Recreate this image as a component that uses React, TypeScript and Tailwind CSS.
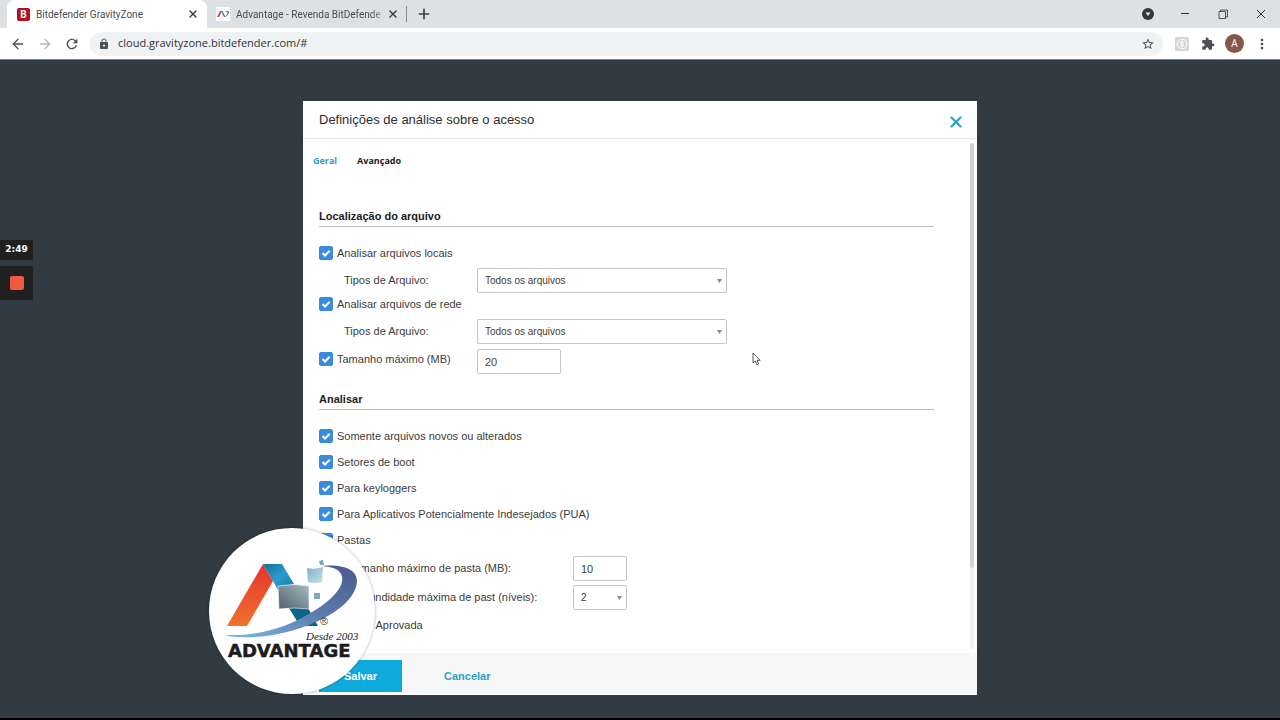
import { useState, type ReactNode } from 'react';
import { ArrowLeft, ArrowRight, Plus, X } from 'lucide-react';
import { MdExtension, MdLock, MdMoreVert, MdRefresh, MdStarBorder } from 'react-icons/md';

/* ── Browser chrome ── */

function AdvantageFavicon() {
  return (
    <svg viewBox="0 0 14 14" className="h-3.5 w-3.5 shrink-0 bg-white" aria-hidden="true">
      <path d="M1 10 4 4h2L3 10z" fill="#d9493b" />
      <path d="M5 4h1.500l3 6H8z" fill="#2a7fa8" />
      <path d="M8 4.500c4-1.500 6 0 4.500 2.500-1 1.500-2.500 2.500-5 3.200 2-1.200 3.500-2.200 4-3.700.5-1.500-1-2-3.500-2z" fill="#4d6a9a" />
    </svg>
  );
}

function TabStrip() {
  return (
    <div className="flex h-7 items-stretch bg-[#dde1e4] font-[Roboto,sans-serif] text-[10px] text-[#4a4d51]">
      <div className="ml-[7px] flex w-[200px] items-center rounded-t-lg bg-white pr-2 pl-2.5">
        <span className="flex h-[13px] w-[13px] items-center justify-center rounded-xs bg-[#b3121b] font-bold text-white">
          B
        </span>
        <span className="ml-1.5 flex-1 truncate">Bitdefender GravityZone</span>
        <button type="button" aria-label="Fechar guia" className="text-[#3c4043]">
          <X className="h-3 w-3" strokeWidth={3} />
        </button>
      </div>
      <div className="flex w-[200px] items-center pr-2 pl-[9px]">
        <AdvantageFavicon />
        <span className="ml-1.5 flex-1 mask-r-from-90% whitespace-nowrap">
          Advantage - Revenda BitDefende
        </span>
        <button type="button" aria-label="Fechar guia" className="text-[#3c4043]">
          <X className="h-3 w-3" strokeWidth={3} />
        </button>
      </div>
      <span className="-ml-px h-4 w-px self-center bg-[#8a8f94]" />
      <button type="button" aria-label="Nova guia" className="ml-[9px] text-[#3c4043]">
        <Plus className="h-4 w-4" strokeWidth={2.5} />
      </button>

      <div className="ml-auto flex items-center text-[#2b2f33]">
        <button type="button" aria-label="Pesquisar guias" className="mr-[26px]">
          <svg viewBox="0 0 12 12" className="h-3 w-3">
            <circle cx="6" cy="6" r="6" fill="#34383c" />
            <path d="M3.500 4.500h5L6 8z" fill="#e8eaed" />
          </svg>
        </button>
        <button type="button" aria-label="Minimizar" className="mr-7">
          <svg viewBox="0 0 10 10" className="h-2.5 w-2.5" stroke="currentColor">
            <path d="M1 4.500h8" />
          </svg>
        </button>
        <button type="button" aria-label="Restaurar" className="mr-7">
          <svg viewBox="0 0 10 10" className="h-2.5 w-2.5" fill="none" stroke="currentColor">
            <path d="M1 2.500h6.500V9.500H1zM2.500 2.500V1H9.500V8H7.500" strokeWidth=".8" />
          </svg>
        </button>
        <button type="button" aria-label="Fechar" className="mr-3.5">
          <svg viewBox="0 0 10 10" className="h-2.5 w-2.5" stroke="currentColor">
            <path d="m1 1 8 8M9 1 1 9" />
          </svg>
        </button>
      </div>
    </div>
  );
}

function AddressBar() {
  return (
    <div className="flex h-8 items-center border-b border-[#7d858d] bg-white text-[#4d5156]">
      <button type="button" aria-label="Voltar" className="ml-2.5">
        <ArrowLeft className="h-4 w-4" strokeWidth={2} />
      </button>
      <button type="button" aria-label="Avançar" className="ml-[11px] text-[#b6b9bc]">
        <ArrowRight className="h-4 w-4" strokeWidth={2} />
      </button>
      <button type="button" aria-label="Recarregar" className="ml-[11px]">
        <MdRefresh className="h-4 w-4" />
      </button>
      <div className="ml-2.5 flex h-6 flex-1 items-center rounded-full bg-[#f0f3f4] px-2">
        <MdLock className="h-3 w-3 shrink-0" />
        <input
          aria-label="Endereço"
          defaultValue="cloud.gravityzone.bitdefender.com/#"
          className="ml-2 min-w-0 flex-1 bg-transparent text-[11px] text-[#2f3237] outline-none"
        />
        <button type="button" aria-label="Adicionar aos favoritos">
          <MdStarBorder className="h-3.5 w-3.5" />
        </button>
      </div>
      <button type="button" aria-label="Extensão" className="ml-3">
        <svg viewBox="0 0 14 14" className="h-3.5 w-3.5" fill="none" stroke="#fff">
          <rect width="14" height="14" rx="1.500" fill="#d6d6d6" stroke="none" />
          <circle cx="7" cy="7" r="4.800" />
          <path d="M8.800 5.200C8 4.200 5.400 4.400 5.400 5.800c0 1.500 3.400.8 3.400 2.400 0 1.400-2.800 1.500-3.600.5M7 3.500v7" strokeWidth=".8" />
        </svg>
      </button>
      <button type="button" aria-label="Extensões" className="ml-3">
        <MdExtension className="h-3.5 w-3.5" />
      </button>
      <button
        type="button"
        className="ml-2.5 h-[19px] w-[19px] rounded-full bg-[#85584c] text-[10px] text-white"
      >
        A
      </button>
      <button type="button" aria-label="Menu" className="mr-2.5 ml-2.5">
        <MdMoreVert className="h-4 w-4" />
      </button>
    </div>
  );
}

/* ── Form parts ── */

function Check({ label }: { label: string }) {
  const [checked, setChecked] = useState(true);
  return (
    <label className="flex h-5 items-center gap-1">
      <span className="relative flex h-3.5 w-3.5">
        <input
          type="checkbox"
          checked={checked}
          onChange={() => setChecked(!checked)}
          className="h-3.5 w-3.5 appearance-none rounded-xs border border-[#3a8be0] bg-white checked:bg-[#3a8be0]"
        />
        {checked && (
          <svg
            viewBox="0 0 14 14"
            className="pointer-events-none absolute inset-0"
            fill="none"
            stroke="#fff"
            strokeWidth="2"
          >
            <path d="m3.500 7 2.500 2.500 4.700-4.700" />
          </svg>
        )}
      </span>
      {label}
    </label>
  );
}

function Dropdown({ id, value, className }: { id: string; value: string; className: string }) {
  return (
    <span className={`relative flex ${className}`}>
      <select
        id={id}
        className="h-[25px] w-full appearance-none rounded-xs border border-[#c4c4c4] bg-white px-[7px] text-[10px]"
      >
        <option>{value}</option>
      </select>
      <svg viewBox="0 0 5 4" className="pointer-events-none absolute top-[11px] right-[5px] h-1 w-[5px]">
        <path d="M0 0h5L2.500 4z" fill="#888" />
      </svg>
    </span>
  );
}

function NumberBox({ id, label, value, className }: { id: string; label?: string; value: string; className: string }) {
  return (
    <input
      id={id}
      aria-label={label}
      defaultValue={value}
      className={`h-[25px] rounded-xs border border-[#c4c4c4] bg-white px-[7px] ${className}`}
    />
  );
}

function SectionTitle({ children }: { children: ReactNode }) {
  return (
    <h2 className="h-[21px] border-b border-[#bdbdbd] text-[11px] leading-5 font-bold text-[#1c1c1c]">
      {children}
    </h2>
  );
}

/* ── Dialog ── */

function FileTypes({ id }: { id: string }) {
  return (
    <div className="mt-[5px] mb-px flex items-center">
      <label htmlFor={id} className="w-[158px] pl-[25px]">
        Tipos de Arquivo:
      </label>
      <Dropdown id={id} value="Todos os arquivos" className="w-[250px]" />
    </div>
  );
}

function SettingsDialog() {
  return (
    <div
      role="dialog"
      aria-labelledby="dialog-title"
      className="w-full max-w-[674px] bg-white text-[11px] text-[#3c3c3c]"
    >
      <header className="flex h-[38px] items-center justify-between border-b border-[#e6e6e6] pr-3 pl-4">
        <h1 id="dialog-title" className="text-[13px] text-[#2e2e2e]">
          Definições de análise sobre o acesso
        </h1>
        <button type="button" aria-label="Fechar janela" className="mt-1 text-[#2ba6cf]">
          <X className="h-[18px] w-[18px]" strokeWidth={3} />
        </button>
      </header>

      <div className="flex">
        <div className="flex-1 pr-9 pb-[18px] pl-4">
          <nav className="-ml-1.5 flex h-[43px] items-center gap-5 font-['Open_Sans',sans-serif] text-[9px] font-bold">
            <a href="#geral" className="text-[#2ba0cb]">
              Geral
            </a>
            <a href="#avancado" className="text-[#1c1c1c]">
              Avançado
            </a>
          </nav>

          <section className="mt-6">
            <SectionTitle>Localização do arquivo</SectionTitle>
            <div className="mt-4">
              <Check label="Analisar arquivos locais" />
              <FileTypes id="local-types" />
              <Check label="Analisar arquivos de rede" />
              <FileTypes id="network-types" />
              <div className="mt-[5px] flex items-start">
                <div className="w-[158px]">
                  <Check label="Tamanho máximo (MB)" />
                </div>
                <NumberBox id="max-size" label="Tamanho máximo (MB)" value="20" className="w-[84px]" />
              </div>
            </div>
          </section>

          <section className="mt-[15px]">
            <SectionTitle>Analisar</SectionTitle>
            <div className="mt-4 flex flex-col items-start gap-1.5">
              <Check label="Somente arquivos novos ou alterados" />
              <Check label="Setores de boot" />
              <Check label="Para keyloggers" />
              <Check label="Para Aplicativos Potencialmente Indesejados (PUA)" />
              <Check label="Pastas" />
            </div>
            <div className="mt-1.5 mb-1 flex items-center">
              <label htmlFor="folder-size" className="w-[254px] pl-[30px]">
                Tamanho máximo de pasta (MB):
              </label>
              <NumberBox id="folder-size" value="10" className="w-[54px]" />
            </div>
            <div className="mb-[5px] flex items-center">
              <label htmlFor="folder-depth" className="w-[254px] pl-[30px]">
                Profundidade máxima de past (níveis):
              </label>
              <Dropdown id="folder-depth" value="2" className="w-[54px]" />
            </div>
            <Check label="Análise Aprovada" />
          </section>
        </div>

        {/* Scroll track */}
        <div className="my-1 mr-[3px] w-1 rounded-full bg-[#f3f3f3]">
          <div className="h-[84%] rounded-full bg-[#d2d2d2]" />
        </div>
      </div>

      <footer className="flex h-[42px] items-center border-b border-white bg-[#f7f7f7] pt-[5px] pl-4 text-[11px] font-bold">
        <button type="button" className="h-8 w-[83px] bg-[#0faadc] text-white">
          Salvar
        </button>
        <button type="button" className="ml-[42px] text-[#2ba0cb]">
          Cancelar
        </button>
      </footer>
    </div>
  );
}

/* ── Overlays ── */

function AdvantageBadge() {
  return (
    <div className="absolute bottom-6 left-[209px] h-[166px] w-[166px] rounded-full bg-white shadow-[0_0_3px_rgba(0,0,0,0.35)]">
      <svg viewBox="0 0 166 166" className="h-full w-full" role="img" aria-label="Advantage">
        <defs>
          <linearGradient id="leg" x1="0" y1="0" x2="0" y2="1">
            <stop offset="0" stopColor="#e4352f" />
            <stop offset="1" stopColor="#f0712c" />
          </linearGradient>
          <linearGradient id="roof" x1="0" y1="0" x2="1" y2="1">
            <stop offset="0" stopColor="#0f6f9f" />
            <stop offset=".5" stopColor="#2a9ccb" />
            <stop offset="1" stopColor="#157ba8" />
          </linearGradient>
          <linearGradient id="block" x1="1" y1="0" x2="0" y2="1">
            <stop offset="0" stopColor="#a8bcc4" />
            <stop offset="1" stopColor="#4d6068" />
          </linearGradient>
          <linearGradient id="tile" x1="0" y1="0" x2="1" y2="1">
            <stop offset="0" stopColor="#7fb2c4" />
            <stop offset="1" stopColor="#c4e0e8" />
          </linearGradient>
          <linearGradient id="swoosh" x1="0" y1="1" x2="1" y2="0">
            <stop offset="0" stopColor="#7db8dc" />
            <stop offset=".5" stopColor="#5b7db0" />
            <stop offset="1" stopColor="#4c5a8c" />
          </linearGradient>
        </defs>
        <path d="M54 36 64 53 38 98H18z" fill="url(#leg)" />
        <path d="M54 36h19l12 20-14 3-2 3-5-9z" fill="url(#roof)" />
        <path d="M80 80h19l10 18H91z" fill="#0d6487" />
        <path d="M69 58q16-3 31 0v23q-15-2-30 0z" fill="url(#block)" stroke="#fff" strokeWidth=".6" />
        <path d="M98 40q8 2 16-1l-1 15q-7 2-14 0z" fill="url(#tile)" />
        <path d="M105 65h6v6h-6zM110 33l4-1 1 5h-4z" fill="#7ba9b8" />
        <path
          d="M18 107C50 108 78 99 98 87 121 74 135 60 133 49 132 42 125 39 113 38 131 36 148 40 148 53 147 70 129 84 107 94 80 106 48 112 18 108z"
          fill="url(#swoosh)"
        />
        <text x="111" y="97" fontSize="11" fill="#333">
          ®
        </text>
        <text x="97" y="112" fontSize="11" fontStyle="italic" fontFamily="Liberation Serif, serif" fill="#222">
          Desde 2003
        </text>
        <text
          x="19"
          y="129"
          fontSize="18"
          fontWeight="bold"
          fontFamily="DejaVu Sans, sans-serif"
          fill="#1c1c1c"
          stroke="#1c1c1c"
          strokeWidth=".5"
        >
          ADVANTAGE
        </text>
      </svg>
    </div>
  );
}

function RecorderControls() {
  return (
    <div className="absolute top-60 left-0 w-[33px]">
      <div className="flex h-5 items-center justify-center rounded-r-xs bg-[#202020] font-['DejaVu_Sans',sans-serif] text-[9px] font-bold text-white">
        2:49
      </div>
      <button
        type="button"
        aria-label="Parar gravação"
        className="mt-1.5 flex h-[34px] w-full items-center justify-center rounded-r-xs bg-[#202020]"
      >
        <span className="h-3.5 w-3.5 rounded-xs bg-[#f15a42]" />
      </button>
    </div>
  );
}

function Pointer() {
  return (
    <svg
      viewBox="0 0 9 14"
      className="pointer-events-none absolute top-[352px] left-[752px] h-3.5 w-[9px]"
      fill="#fff"
      stroke="#444"
      strokeWidth=".9"
    >
      <path d="M1 1v10l2.300-2 1.600 3.800 1.700-.8L5 8.300h3.200z" />
    </svg>
  );
}

export default function App() {
  return (
    <div className="relative flex min-h-screen flex-col border-b-2 border-black bg-[#303b44] font-['Liberation_Sans',Arial,sans-serif]">
      <div className="font-['Open_Sans',sans-serif]">
        <TabStrip />
        <AddressBar />
      </div>
      <main className="flex flex-1 items-start justify-center pt-[41px]">
        <SettingsDialog />
      </main>
      <AdvantageBadge />
      <RecorderControls />
      <Pointer />
    </div>
  );
}
